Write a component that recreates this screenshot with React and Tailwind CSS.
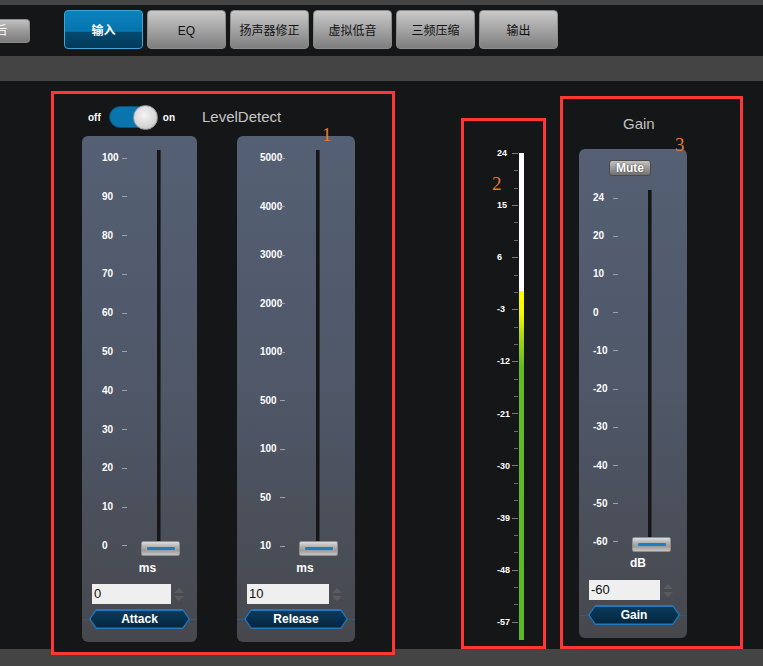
import React from 'react';

const tabs = ['输入', 'EQ', '扬声器修正', '虚拟低音', '三频压缩', '输出'];

function Tab({ label, active }) {
  if (active) {
    return (
      <div className="w-[79px] h-[39px] rounded-[4px] border border-[#3aa6dc] bg-[linear-gradient(to_bottom,#0b82bd_0%,#0674ad_55%,#034a6e_58%,#033a5a_100%)] flex items-center justify-center pt-[2px] text-white text-[12px] font-bold">
        {label}
      </div>
    );
  }
  return (
    <div className="w-[79px] h-[39px] rounded-[4px] border border-[#8c8c8c] bg-[linear-gradient(to_bottom,#c9c9c9,#a4a4a4_50%,#7e7e7e)] flex items-center justify-center pt-[2px] text-[#111] text-[12px]">
      {label}
    </div>
  );
}

function Spin() {
  return (
    <div className="flex flex-col gap-[3px] ml-[3px]">
      <div className="w-0 h-0 border-l-[5px] border-r-[5px] border-b-[5px] border-l-transparent border-r-transparent border-b-[#5c5c5c]" />
      <div className="w-0 h-0 border-l-[5px] border-r-[5px] border-t-[5px] border-l-transparent border-r-transparent border-t-[#5c5c5c]" />
    </div>
  );
}

function HexButton({ label, width, left, right }) {
  return (
    <div className="flex items-center">
      <div className="h-px bg-[#1f5f93]" style={{ width: left }} />
      <div
        className="h-[20px] bg-[#1f78c0] [clip-path:polygon(7px_0,calc(100%-7px)_0,100%_50%,calc(100%-7px)_100%,7px_100%,0_50%)] flex"
        style={{ width }}
      >
        <div className="m-[1.5px] flex-1 bg-[linear-gradient(to_bottom,#0a3a5c,#05263e)] [clip-path:polygon(6px_0,calc(100%-6px)_0,100%_50%,calc(100%-6px)_100%,6px_100%,0_50%)] flex items-center justify-center text-white text-[12px] font-bold">
          {label}
        </div>
      </div>
      <div className="h-px bg-[#1f5f93]" style={{ width: right }} />
    </div>
  );
}

function Thumb({ left, top }) {
  return (
    <div
      className="absolute w-[39px] h-[15px] rounded-[2px] border border-[#8e8e8e] bg-[linear-gradient(to_bottom,#dcdcdc,#b4b4b4_35%,#9c9c9c_65%,#c4c4c4)] flex items-center justify-center"
      style={{ left, top }}
    >
      <div className="w-[28px] h-[3px] rounded-[1px] bg-[#1c7fc6]" />
    </div>
  );
}

function Scale({ labels, height }) {
  return (
    <div className="flex flex-col justify-between w-[25px] mt-[2px]" style={{ height }}>
      {labels.map((l) => (
        <div key={l} className="h-[12px] flex items-center">
          <div className="w-[20px] text-white text-[10px] font-bold leading-[12px]">{l}</div>
          <div className="w-[5px] h-px bg-[#9aa2ae]" />
        </div>
      ))}
    </div>
  );
}

function SliderPanel({ width, labels, labelsLeft, scaleH, areaH, trackGap, trackH, thumbLeft, thumbTop, unit, unitPad, inputW, value, btn, btnW, lineL, lineR, top, unitMt, inputMt }) {
  return (
    <div className="rounded-[6px] bg-[linear-gradient(to_bottom,#556074,#4f5768_50%,#46484d)] flex flex-col pb-[13px]" style={{ width }}>
      {top}
      <div className="relative flex items-start" style={{ height: areaH }}>
        <div style={{ marginLeft: labelsLeft }}>
          <Scale labels={labels} height={scaleH} />
        </div>
        <div className="w-[4px] bg-[#161616] border-r border-[#2e3238]" style={{ marginLeft: trackGap, height: trackH }} />
        <Thumb left={thumbLeft} top={thumbTop} />
      </div>
      <div className="text-center text-white text-[12px] font-bold leading-[14px]" style={{ paddingLeft: unitPad, marginTop: unitMt }}>
        {unit}
      </div>
      <div className="flex items-center ml-[10px]" style={{ marginTop: inputMt }}>
        <div className="h-[20px] bg-[#efefef] text-[13px] leading-[20px] text-[#111] pl-[2px]" style={{ width: inputW }}>
          {value}
        </div>
        <Spin />
      </div>
      <div className="mt-[5px]">
        <HexButton label={btn} width={btnW} left={lineL} right={lineR} />
      </div>
    </div>
  );
}

function Meter() {
  const labels = ['24', '15', '6', '-3', '-12', '-21', '-30', '-39', '-48', '-57'];
  const ticks = [];
  for (let i = 0; i < 28; i++) ticks.push(i);
  return (
    <div className="flex items-start pl-[33px]">
      <div className="flex flex-col justify-between w-[14px] h-[481px] mt-[26px]">
        {labels.map((l) => (
          <div key={l} className="h-[12px] leading-[12px] text-white text-[9px] font-bold">{l}</div>
        ))}
      </div>
      <div className="flex flex-col justify-between items-end w-[6px] h-[470px] mt-[32px] ml-[1px]">
        {ticks.map((t) => (
          <div key={t} className={t % 3 === 0 ? 'w-[6px] h-px bg-[#7c7c7c]' : 'w-[4px] h-px bg-[#6a6a6a]'} />
        ))}
      </div>
      <div className="w-[5px] h-[487px] mt-[32px] ml-[1px] bg-[linear-gradient(to_bottom,#ffffff_0%,#ffffff_28.3%,#ffff00_28.3%,#f4fa00_33%,#a6d414_38%,#64bb22_44%,#5cb825_100%)]" />
    </div>
  );
}

export default function App() {
  const mark = 'absolute text-[19px] leading-none text-[#e07b39] [font-family:"Liberation_Serif",serif]';
  return (
    <div className="w-[763px] h-[666px] overflow-hidden bg-[#151618] [font-family:'Liberation_Sans','Noto_Sans_CJK_SC',sans-serif] flex flex-col">
      <div className="h-[5px] bg-[#454545]" />
      <div className="h-[51px] flex items-start">
        <div className="w-[30px] h-[24px] mt-[14px] overflow-hidden rounded-r-[4px] border border-l-0 border-[#8c8c8c] bg-[linear-gradient(to_bottom,#c0c0c0,#9a9a9a_50%,#7c7c7c)] flex items-center text-[12px] text-white">
          <span className="ml-[-5px]">后</span>
        </div>
        <div className="flex gap-[4px] ml-[34px] mt-[5px]">
          {tabs.map((t, i) => (
            <Tab key={t} label={t} active={i === 0} />
          ))}
        </div>
      </div>
      <div className="h-[25px] bg-[#444444]" />
      <div className="h-[568px] flex items-start">
        {/* box 1 */}
        <div className="relative ml-[51px] mt-[10px] w-[344px] h-[564px] border-[3px] border-[#ff3636] bg-[#151618] flex flex-col">
          <div className="flex items-center h-[22px] mt-[12px] ml-[34px]">
            <span className="text-white text-[10px] font-bold">off</span>
            <div className="ml-[8px] w-[48px] h-[22px] rounded-full bg-[#0a74ae] border border-[#07507a] flex items-center justify-end">
              <div className="w-[25px] h-[25px] rounded-full bg-[radial-gradient(circle_at_45%_40%,#f4f4f4,#d6d6d6_60%,#b0b0b0)] border border-[#9a9a9a] mr-[-2px]" />
            </div>
            <span className="ml-[6px] text-white text-[10px] font-bold">on</span>
            <span className="ml-[27px] text-[#c6c6c6] text-[15px]">LevelDetect</span>
          </div>
          <div className="flex mt-[8px] ml-[28px] gap-[40px]">
            <SliderPanel
              width={115}
              labels={['100', '90', '80', '70', '60', '50', '40', '30', '20', '10', '0']}
              labelsLeft={20}
              scaleH={400}
              areaH={406}
              top={<div className="h-[14px]" />}
              trackGap={30}
              trackH={396}
              thumbLeft={59}
              thumbTop={391}
              unit="ms"
              unitPad={16}
              unitMt={5}
              inputMt={9}
              inputW={79}
              value="0"
              btn="Attack"
              btnW={101}
              lineL={7}
              lineR={7}
            />
            <SliderPanel
              width={118}
              labels={['5000', '4000', '3000', '2000', '1000', '500', '100', '50', '10']}
              labelsLeft={23}
              scaleH={400}
              areaH={406}
              top={<div className="h-[14px]" />}
              trackGap={31}
              trackH={396}
              thumbLeft={62}
              thumbTop={391}
              unit="ms"
              unitPad={18}
              unitMt={5}
              inputMt={9}
              inputW={82}
              value="10"
              btn="Release"
              btnW={104}
              lineL={7}
              lineR={7}
            />
          </div>
          <span className={mark + ' left-[268px] top-[31px]'}>1</span>
        </div>

        {/* box 2 */}
        <div className="relative ml-[66px] mt-[37px] w-[85px] h-[531px] border-[3px] border-[#ff3636]">
          <Meter />
          <span className={mark + ' left-[28px] top-[53px]'}>2</span>
        </div>

        {/* box 3 */}
        <div className="relative ml-[14px] mt-[15px] w-[183px] h-[553px] border-[3px] border-[#ff3636] flex flex-col">
          <div className="pt-[17px] h-[50px] pl-[60px] text-[#c2c2c2] text-[15px] leading-[16px]">Gain</div>
          <div className="ml-[16px]">
            <SliderPanel
              width={108}
              labels={['24', '20', '10', '0', '-10', '-20', '-30', '-40', '-50', '-60']}
              labelsLeft={14}
              scaleH={356}
              areaH={363}
              top={
                <div className="pt-[11px] pl-[30px] h-[41px]">
                  <div className="w-[42px] h-[16px] rounded-[3px] border border-[#4a4a4a] bg-[linear-gradient(to_bottom,#c4c4c4,#9a9a9a_50%,#707070)] flex items-center justify-center text-white text-[12px] font-bold [text-shadow:0_0_2px_#333]">
                    Mute
                  </div>
                </div>
              }
              trackGap={30}
              trackH={354}
              thumbLeft={53}
              thumbTop={347}
              unit="dB"
              unitPad={10}
              unitMt={3}
              inputMt={10}
              inputW={71}
              value="-60"
              btn="Gain"
              btnW={92}
              lineL={9}
              lineR={7}
            />
          </div>
          <span className={mark + ' left-[112px] top-[36px]'}>3</span>
        </div>
      </div>
      <div className="h-[17px] bg-[#444444]" />
    </div>
  );
}
